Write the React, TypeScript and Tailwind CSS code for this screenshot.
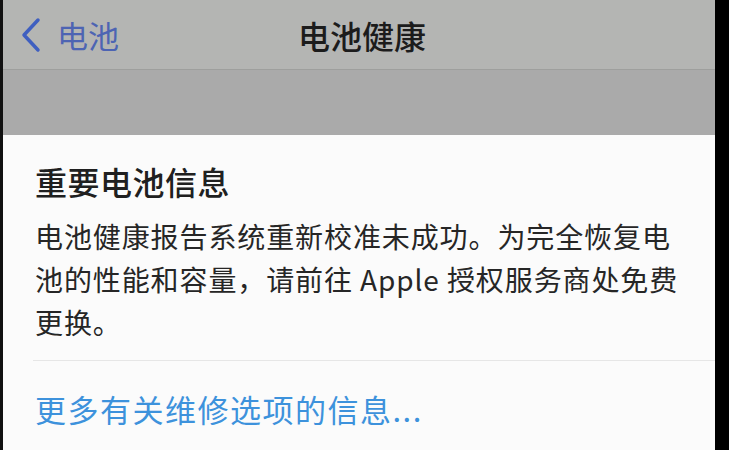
import React from 'react';

const font = { fontFamily: '"Noto Sans CJK SC", "Noto Sans", sans-serif' };

function BackChevron() {
  return (
    <svg width="24" height="36" viewBox="0 0 24 36" fill="none">
      <polyline points="19,3 5,18 19,33" stroke="#3f5fc0" strokeWidth="3.5" strokeLinecap="round" strokeLinejoin="round" />
    </svg>
  );
}

export default function App() {
  return (
    <div className="flex h-[450px] w-[729px] overflow-hidden bg-black" style={font}>
      <div className="w-[3px] bg-[#111]" />
      <div className="flex flex-1 flex-col">
        {/* nav bar */}
        <div className="relative flex h-[70px] items-center border-b border-[#9e9f9d] bg-[#b4b5b3]">
          <div className="flex items-center gap-[14px] pl-[16px]">
            <BackChevron />
            <span className="text-[31px] leading-none text-[#4d64b3]">电池</span>
          </div>
          <div className="absolute inset-x-0 text-center text-[32px] font-medium leading-none text-[#1c1c1c]">
            <span className="pl-[6px]">电池健康</span>
          </div>
        </div>
        <div className="h-[65px] bg-[#aaaaaa]" />

        {/* card */}
        <div className="flex-1 bg-[#fbfbfb]">
          <div className="w-[680px] pl-[32px] pt-[26px]">
            <h2 className="text-[32px] font-medium leading-[40px] tracking-[0.5px] text-[#202020]">重要电池信息</h2>
            <p className="mt-[14px] text-[28px] leading-[43px] tracking-[0.9px] text-[#262626]">
              电池健康报告系统重新校准未成功。为完全恢复电池的性能和容量，请前往 Apple 授权服务商处免费更换。
            </p>
          </div>
          <div className="ml-[30px] mt-[16px] border-t border-[#e6e6e6]" />
          <div className="pl-[32px] pt-[32px] text-[31px] leading-none tracking-[1.5px] text-[#3d92dc]">
            更多有关维修选项的信息...
          </div>
        </div>
      </div>
      <div className="w-[14px] bg-black" />
    </div>
  );
}
